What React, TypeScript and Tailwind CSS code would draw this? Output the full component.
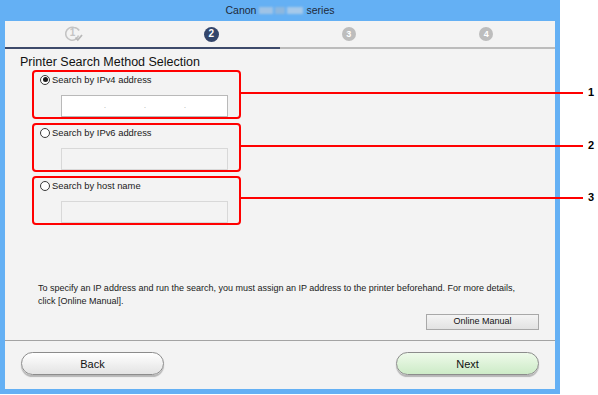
import React from 'react';

// Canon printer setup: "Printer Search Method Selection" step with annotation callouts

const font = "font-['Liberation_Sans',Arial,sans-serif]";

const Radio = ({ checked }: { checked?: boolean }) => (
    <span className="w-[10px] h-[10px] rounded-full border border-[#3a3a3a] bg-white flex items-center justify-center shrink-0">
        {checked && <span className="w-[5px] h-[5px] rounded-full bg-[#1a1a1a]" />}
    </span>
);

const OptionBox = ({ label, checked, ipv4 }: { label: string; checked?: boolean; ipv4?: boolean }) => (
    <div className="w-[209px] h-[49px] border-2 border-[#ff0000] rounded-[4px] flex flex-col">
        <div className="flex items-center gap-[2px] pl-[6px] pt-[3px] h-[14px]">
            <Radio checked={checked} />
            <span className="text-[9.4px] text-[#1a1a1a] leading-none">{label}</span>
        </div>
        <div
            className={
                ipv4
                    ? 'ml-[27px] mt-[10px] w-[167px] h-[22px] bg-white border border-[#b9b9b9] flex items-center pl-[42px] gap-[38px] text-[7px] text-[#9a9a9a]'
                    : 'ml-[27px] mt-[10px] w-[167px] h-[22px] bg-[#f3f3f3] border border-[#d8d8d8]'
            }
        >
            {ipv4 && (
                <>
                    <span>.</span>
                    <span>.</span>
                    <span>.</span>
                </>
            )}
        </div>
    </div>
);

const StepDone = () => (
    <div className="relative w-[18px] h-[16px]">
        <svg width="18" height="16" viewBox="0 0 18 16" className="absolute inset-0">
            <path d="M13.5 9.5 A6.5 6.5 0 1 1 9 1.5 A6.5 6.5 0 0 1 14.2 4.5" fill="none" stroke="#c4c4c4" strokeWidth="1.6" />
            <path d="M10.5 11.5 L12.8 14 L17 9" fill="none" stroke="#b8b8b8" strokeWidth="1.8" />
        </svg>
        <span className="absolute left-[5px] top-[2px] text-[10px] font-bold text-[#c4c4c4] leading-none">1</span>
    </div>
);

const StepNum = ({ n, active }: { n: number; active?: boolean }) => (
    <span
        className={
            active
                ? 'w-[15px] h-[15px] rounded-full bg-[#34466b] text-white text-[10px] font-bold flex items-center justify-center leading-none'
                : 'w-[14px] h-[14px] rounded-full bg-[#bdbdbd] text-white text-[9px] font-bold flex items-center justify-center leading-none'
        }
    >
        {n}
    </span>
);

const PillButton = ({ label, green }: { label: string; green?: boolean }) => (
    <button
        className={
            'w-[143px] h-[23px] rounded-full border border-[#8c8c8c] text-[11px] text-[#111] shadow-[0_2px_1px_rgba(0,0,0,0.25)] ' +
            (green ? 'bg-gradient-to-b from-[#eefaea] to-[#cdebc7]' : 'bg-gradient-to-b from-white to-[#e3e3e3]')
        }
    >
        {label}
    </button>
);

export default function App() {
    return (
        <div className={`relative w-[598px] h-[395px] bg-white ${font}`}>
            <div className="w-[560px] h-[394px] bg-[#64b0f4] flex flex-col px-[5px] pb-[5px]">
                {/* Title bar */}
                <div className="h-[21px] flex items-center justify-center gap-[3px] text-[10.5px] text-[#1e2a3a]">
                    <span>Canon</span>
                    <span className="flex gap-[2px] blur-[1px]">
                        <span className="w-[14px] h-[7px] bg-[#9fc3e6]" />
                        <span className="w-[10px] h-[7px] bg-[#8db7df]" />
                        <span className="w-[16px] h-[7px] bg-[#a6c9ea]" />
                    </span>
                    <span>series</span>
                </div>

                <div className="flex-1 bg-[#f3f3f3] flex flex-col">
                    {/* Steps */}
                    <div className="h-[26px] grid grid-cols-4 items-center justify-items-center">
                        <StepDone />
                        <StepNum n={2} active />
                        <StepNum n={3} />
                        <StepNum n={4} />
                    </div>
                    <div className="h-[2px] flex">
                        <div className="w-[275px] bg-[#3d4a6a]" />
                        <div className="flex-1 bg-[#bcbcbc]" />
                    </div>

                    <div className="pl-[15px] pt-[7px] text-[12.5px] text-[#111] leading-none">Printer Search Method Selection</div>

                    <div className="ml-[27px] mt-[1px] flex flex-col gap-[4px]">
                        <OptionBox label="Search by IPv4 address" checked ipv4 />
                        <OptionBox label="Search by IPv6 address" />
                        <OptionBox label="Search by host name" />
                    </div>

                    <p className="ml-[33px] mt-[57px] text-[9px] leading-[13px] text-[#1a1a1a]">
                        To specify an IP address and run the search, you must assign an IP address to the printer beforehand. For more details,
                        <br />
                        click [Online Manual].
                    </p>

                    <div className="flex justify-end pr-[16px] mt-[6px]">
                        <button className="w-[113px] h-[16px] border border-[#a8a8a8] bg-gradient-to-b from-[#f4f4f4] to-[#e2e2e2] text-[9px] text-[#111]">
                            Online Manual
                        </button>
                    </div>

                    <div className="mt-[10px] h-px bg-[#a3a3a3]" />

                    <div className="flex-1 flex items-center justify-between px-[16px] pb-[2px]">
                        <PillButton label="Back" />
                        <PillButton label="Next" green />
                    </div>
                </div>
            </div>

            {/* Callout lines and numbers */}
            <div className="absolute left-[241px] top-[92px] w-[342px] h-[2px] bg-[#ff0000]" />
            <div className="absolute left-[241px] top-[145px] w-[342px] h-[2px] bg-[#ff0000]" />
            <div className="absolute left-[241px] top-[197px] w-[342px] h-[2px] bg-[#ff0000]" />
            <span className="absolute left-[588px] top-[87px] text-[11px] font-bold text-black leading-none">1</span>
            <span className="absolute left-[588px] top-[140px] text-[11px] font-bold text-black leading-none">2</span>
            <span className="absolute left-[588px] top-[192px] text-[11px] font-bold text-black leading-none">3</span>
        </div>
    );
}
